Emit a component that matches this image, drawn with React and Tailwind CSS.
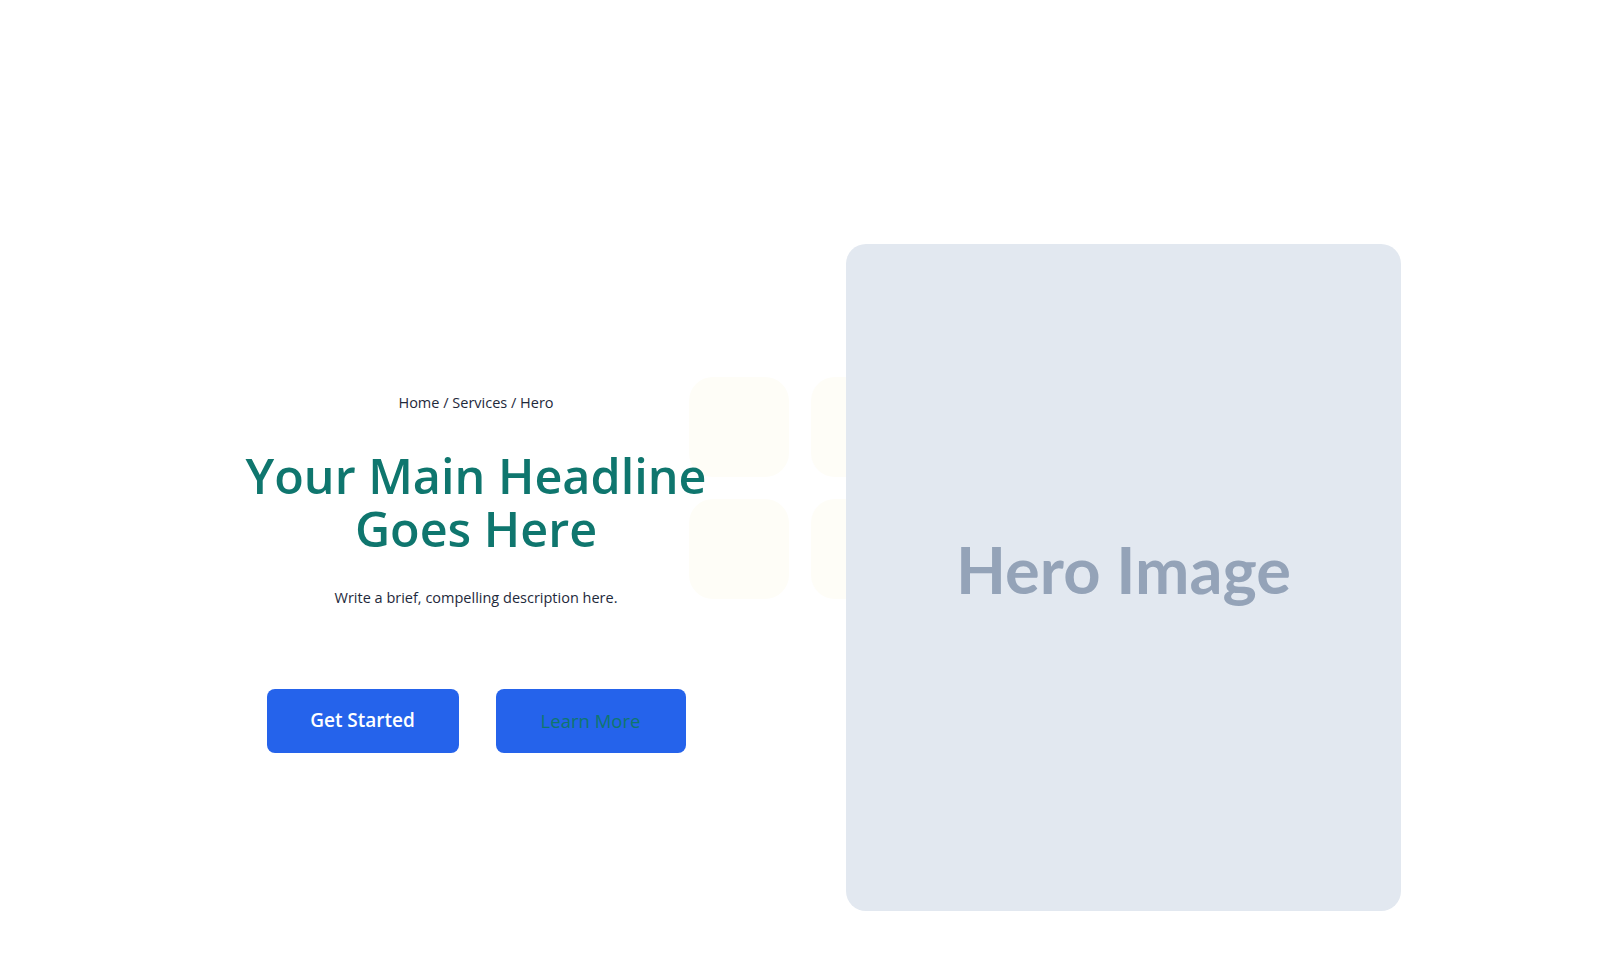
export default function App() {
  return (
    <div className="min-h-[978px] w-full bg-white" style={{ fontFamily: '"Open Sans", "Noto Sans", sans-serif' }}>
      <section className="relative mx-auto w-[1202px] pt-[244px] pb-[67px]">
        <div className="pointer-events-none absolute left-[490px] top-[377px] z-0 grid grid-cols-[100px_100px] gap-[22px]">
          <div className="h-[100px] w-[100px] rounded-[24px] bg-[#fefdf7]" />
          <div className="h-[100px] w-[100px] rounded-[24px] bg-[#fefdf7]" />
          <div className="h-[100px] w-[100px] rounded-[24px] bg-[#fefdf7]" />
          <div className="h-[100px] w-[100px] rounded-[24px] bg-[#fefdf7]" />
        </div>
        <div className="relative z-10 flex items-center gap-[93px]">
          <div className="flex w-[554px] flex-col items-center pb-[10px] text-center">
            <nav className="text-[14.5px] leading-[20px] text-[#1e293b]">Home / Services / Hero</nav>
            <h1 className="mt-[36px] text-[48.5px] font-semibold leading-[53px] text-[#0f766e]">
              Your Main Headline
              <br />
              Goes Here
            </h1>
            <p className="mt-[32px] text-[14.5px] leading-[22px] text-[#1e293b]">
              Write a brief, compelling description here.
            </p>
            <div className="mt-[80px] flex gap-[37px]">
              <button className="flex h-[64px] w-[192px] items-center justify-center rounded-lg bg-[#2563eb] text-[19px] font-semibold text-white">
                Get Started
              </button>
              <button className="flex h-[64px] w-[190px] items-center justify-center rounded-lg bg-[#2563eb] text-[18.5px] font-medium text-[#0f766e]">
                Learn More
              </button>
            </div>
          </div>
          <div className="relative z-10 flex h-[667px] w-[555px] items-center justify-center rounded-[20px] bg-[#e2e8f0] pb-[16px]">
            <span className="text-[65px] font-bold leading-none text-[#94a3b8]" style={{ fontFamily: 'Lato, sans-serif' }}>
              Hero Image
            </span>
          </div>
        </div>
      </section>
    </div>
  );
}
